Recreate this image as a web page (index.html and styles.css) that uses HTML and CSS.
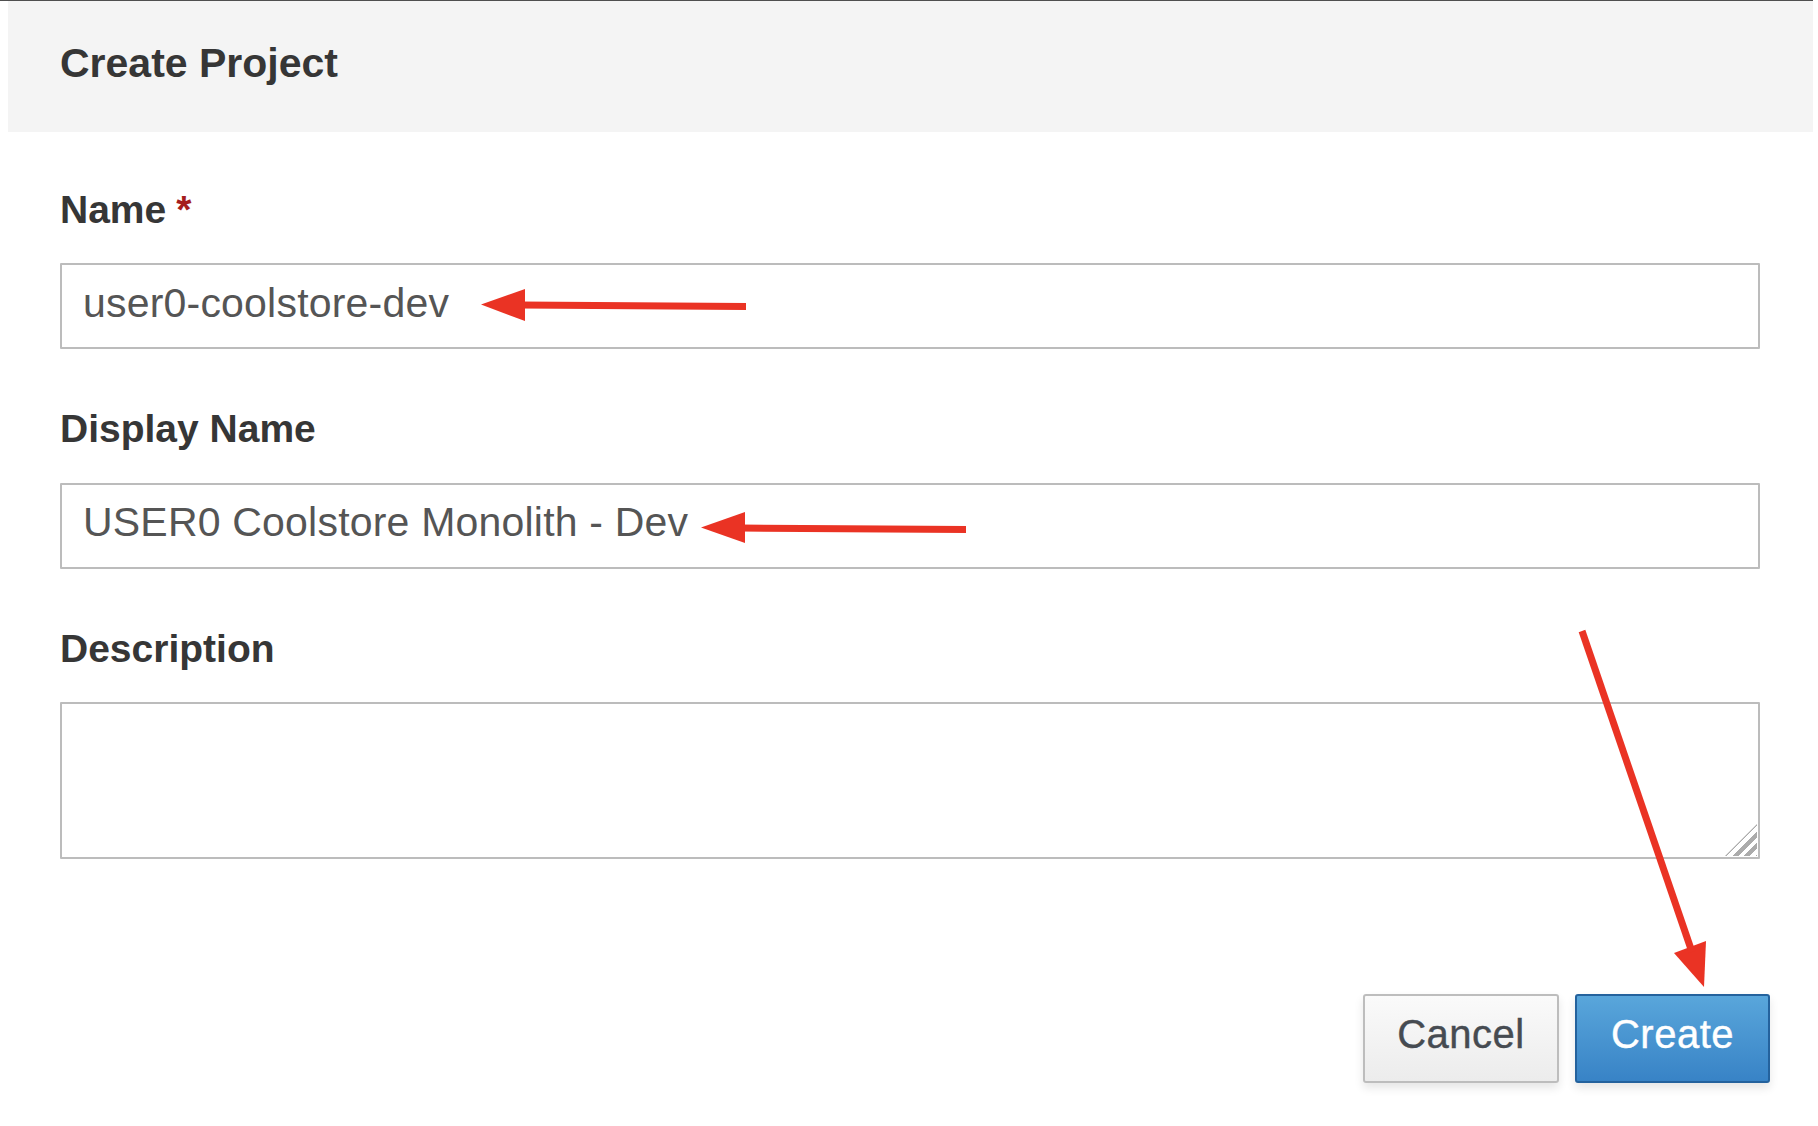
FILE: index.html
```html
<!DOCTYPE html>
<html lang="en">
<head>
<meta charset="utf-8">
<title>Create Project</title>
<link rel="stylesheet" href="styles.css">
</head>
<body>
<div class="modal">
  <div class="modal-header">
    <h1 class="modal-title">Create Project</h1>
  </div>
  <form class="modal-body">
    <div class="form-group">
      <label class="form-label">Name<span class="req">*</span></label>
      <input class="form-control" type="text" value="user0-coolstore-dev">
    </div>
    <div class="form-group">
      <label class="form-label">Display Name</label>
      <input class="form-control" type="text" value="USER0 Coolstore Monolith - Dev">
    </div>
    <div class="form-group">
      <label class="form-label">Description</label>
      <div class="textarea-wrap">
        <textarea class="form-control textarea"></textarea>
        <span class="grip"></span>
      </div>
    </div>
    <div class="actions">
      <button type="button" class="btn btn-default">Cancel</button>
      <button type="button" class="btn btn-primary">Create</button>
    </div>
  </form>
</div>
<svg class="annotations" width="1818" height="1126" viewBox="0 0 1818 1126">
  <g fill="#ea3324" stroke="none">
    <polygon points="481,304.5 525,289 525,321"/>
    <polygon points="701,527.5 745,512 745,543"/>
    <polygon points="1704,987 1674,953 1706,941"/>
  </g>
  <g stroke="#ea3324" stroke-width="7" fill="none">
    <line x1="520" y1="305" x2="746" y2="306.5"/>
    <line x1="740" y1="528" x2="966" y2="529.5"/>
    <line x1="1582" y1="631" x2="1692" y2="952"/>
  </g>
</svg>
</body>
</html>
```
FILE: styles.css
```css
html, body {
  margin: 0;
  padding: 0;
  background: #ffffff;
}

body {
  position: relative;
  width: 1818px;
  height: 1126px;
  overflow: hidden;
  font-family: "Liberation Sans", Arial, sans-serif;
  color: #363636;
}

.modal {
  width: 1813px;
  border-top: 1px solid #4f4f4f;
}

.modal-header {
  margin-left: 8px;
  height: 131px;
  box-sizing: border-box;
  padding: 38px 0 0 52px;
  background: #f4f4f4;
}

.modal-title {
  margin: 0;
  font-size: 41px;
  line-height: 48px;
  font-weight: 700;
  color: #363636;
}

.modal-body {
  padding: 53.5px 0 0 60px;
  margin: 0;
}

.form-group {
  width: 1700px;
  margin-bottom: 56px;
}

.form-group:last-of-type {
  margin-bottom: 0;
}

.form-label {
  display: block;
  font-size: 39px;
  line-height: 48px;
  font-weight: 700;
  color: #363636;
  margin-bottom: 29.5px;
}

.req {
  color: #a51d1d;
  margin-left: 10px;
}

.form-control {
  display: block;
  width: 1700px;
  height: 86px;
  box-sizing: border-box;
  margin: 0;
  padding: 0 21px 6px 21px;
  border: 2px solid #bcbcbc;
  border-radius: 1px;
  background: #ffffff;
  font-family: "Liberation Sans", Arial, sans-serif;
  font-size: 41px;
  letter-spacing: 0.2px;
  color: #555555;
  outline: none;
}

.textarea-wrap {
  position: relative;
  width: 1700px;
}

.textarea {
  height: 157px;
  resize: none;
}

.grip {
  position: absolute;
  right: 3px;
  bottom: 3px;
  width: 32px;
  height: 32px;
  background: repeating-linear-gradient(135deg, transparent 0 4px, #ababab 4px 8px);
  clip-path: polygon(100% 0, 100% 100%, 0 100%);
}

.actions {
  width: 1710px;
  margin-top: 135px;
  display: flex;
  justify-content: flex-end;
  gap: 16px;
}

.btn {
  height: 89px;
  box-sizing: border-box;
  padding: 0 0 8px 0;
  border-radius: 3px;
  font-family: "Liberation Sans", Arial, sans-serif;
  font-size: 40px;
  font-weight: 400;
  letter-spacing: 0.5px;
  -webkit-text-stroke: 0.4px currentColor;
  box-shadow: 0 5px 10px rgba(0, 0, 0, 0.10);
  cursor: pointer;
}

.btn-default {
  width: 196px;
  border: 2px solid #bdbdbd;
  background: linear-gradient(#fafafa, #ececec);
  color: #464b51;
}

.btn-primary {
  width: 195px;
  border: 2px solid #24629d;
  background: linear-gradient(#59a6db, #3883c6);
  color: #ffffff;
}

.annotations {
  position: absolute;
  top: 0;
  left: 0;
  pointer-events: none;
}
```
